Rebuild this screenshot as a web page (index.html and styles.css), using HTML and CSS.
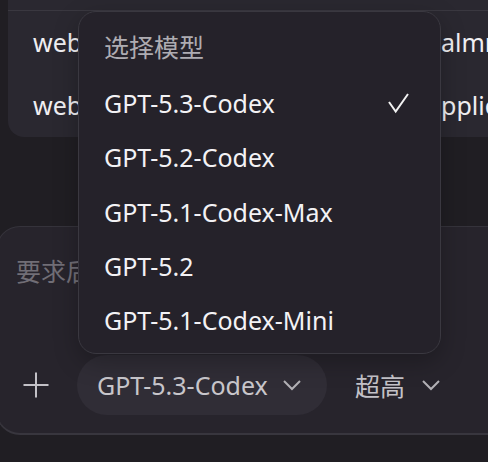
FILE: index.html
```html
<!DOCTYPE html>
<html lang="zh">
<head>
<meta charset="utf-8">
<link rel="stylesheet" href="styles.css">
</head>
<body>
<div class="page">
  <div class="list">
    <div class="list-top"></div>
    <div class="row"><span>webhook-server</span><span>almnet</span></div>
    <div class="row"><span>webapp-client</span><span>pplication</span></div>
  </div>

  <div class="composer">
    <div class="placeholder">要求后续变更</div>
    <div class="toolbar">
      <span class="plus">
        <svg width="28" height="28" viewBox="0 0 28 28"><path d="M14 1.5v25M1.5 14h25" stroke="#c3c1c7" stroke-width="2" fill="none"/></svg>
      </span>
      <span class="pill">GPT-5.3-Codex
        <svg class="chev" width="20" height="12" viewBox="0 0 20 12"><path d="M2 2l8 8 8-8" stroke="#b3b1b6" stroke-width="2" fill="none"/></svg>
      </span>
      <span class="effort">超高
        <svg class="chev" width="20" height="12" viewBox="0 0 20 12"><path d="M2 2l8 8 8-8" stroke="#b3b1b6" stroke-width="2" fill="none"/></svg>
      </span>
    </div>
  </div>

  <div class="menu">
    <div class="menu-title">选择模型</div>
    <div class="menu-item">GPT-5.3-Codex
      <svg class="check" width="22" height="22" viewBox="0 0 22 22"><path d="M1 10l6.7 9.5L20 2" stroke="#f2f2f2" stroke-width="2" fill="none"/></svg>
    </div>
    <div class="menu-item">GPT-5.2-Codex</div>
    <div class="menu-item">GPT-5.1-Codex-Max</div>
    <div class="menu-item">GPT-5.2</div>
    <div class="menu-item">GPT-5.1-Codex-Mini</div>
  </div>
</div>
</body>
</html>
```

FILE: styles.css
```css
html, body {
  margin: 0;
  padding: 0;
  background: #201e23;
  font-family: "Noto Sans", "Noto Sans CJK SC", sans-serif;
  overflow: hidden;
}
.page {
  position: relative;
  width: 488px;
  height: 462px;
  overflow: hidden;
}
.list {
  margin-left: 8px;
  height: 137px;
  background: #2a2830;
  border-bottom-left-radius: 16px;
}
.list-top {
  height: 10px;
  border-bottom: 1px solid #3a3840;
}
.row {
  display: grid;
  grid-template-columns: 408px 1fr;
  padding-left: 25px;
  height: 63px;
  line-height: 63px;
  font-size: 25px;
  color: #f0eff2;
  white-space: nowrap;
  overflow: hidden;
}
.composer {
  margin-top: 89px;
  margin-left: -4px;
  width: 520px;
  height: 209px;
  box-sizing: border-box;
  background: #27242c;
  border: 1px solid #35333b;
  border-bottom: 2px solid #38363e;
  border-radius: 24px;
}
.placeholder {
  padding-left: 19px;
  padding-top: 22px;
  height: 44px;
  line-height: 44px;
  font-size: 25px;
  color: #716e76;
}
.toolbar {
  display: flex;
  align-items: center;
  margin-top: 62px;
  padding-left: 25px;
}
.plus {
  display: flex;
  width: 28px;
  height: 28px;
}
.pill {
  display: flex;
  align-items: center;
  margin-left: 27px;
  width: 250px;
  height: 60px;
  box-sizing: border-box;
  padding-left: 20px;
  border-radius: 30px;
  background: #302d36;
  color: #c8c6cb;
  font-size: 25px;
}
.pill .chev { margin-left: 14px; }
.effort {
  display: flex;
  align-items: center;
  margin-left: 28px;
  color: #c4c2c8;
  font-size: 25px;
}
.effort .chev { margin-left: 16px; }
.menu {
  position: absolute;
  left: 78px;
  top: 11px;
  width: 363px;
  height: 343px;
  box-sizing: border-box;
  padding: 8px 30px 0 25px;
  background: #25222a;
  border: 1px solid #3a3840;
  border-radius: 18px;
  box-shadow: 0 8px 24px rgba(0,0,0,0.25);
}
.menu-title {
  height: 56px;
  line-height: 54px;
  font-size: 25px;
  color: #aeacb2;
}
.menu-item {
  display: flex;
  align-items: center;
  justify-content: space-between;
  height: 54.3px;
  font-size: 25px;
  color: #f3f2f5;
}
.check { margin-right: 0; }
```
